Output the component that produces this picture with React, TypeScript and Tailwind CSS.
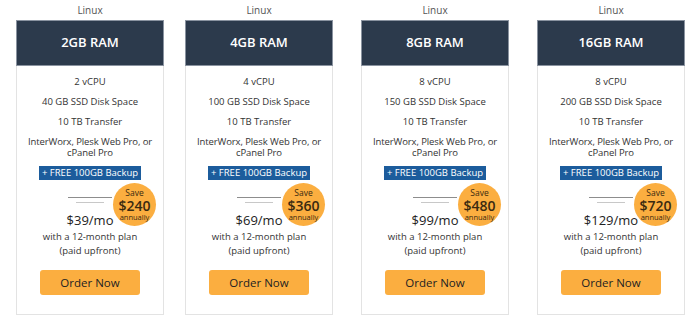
const plans = [
  { ram: "2GB RAM", cpu: "2 vCPU", disk: "40 GB SSD Disk Space", price: "$39/mo", save: "$240", ml: "ml-[16px]" },
  { ram: "4GB RAM", cpu: "4 vCPU", disk: "100 GB SSD Disk Space", price: "$69/mo", save: "$360", ml: "ml-[21px]" },
  { ram: "8GB RAM", cpu: "8 vCPU", disk: "150 GB SSD Disk Space", price: "$99/mo", save: "$480", ml: "ml-[28px]" },
  { ram: "16GB RAM", cpu: "8 vCPU", disk: "200 GB SSD Disk Space", price: "$129/mo", save: "$720", ml: "ml-[28px]" },
];

function PlanCard({ plan }: { plan: (typeof plans)[number] }) {
  return (
    <div className={`flex flex-col items-center w-[148px] ${plan.ml}`}>
      <div className="h-[20px] leading-[20px] text-[10px] text-[#555]">Linux</div>
      <div className="relative w-full h-[295px] border border-[#e3e3e3] flex flex-col items-center">
        <div className="w-[calc(100%+2px)] -mx-px -mt-px h-[46px] bg-[#2c3a4c] border border-[#8a93a0] flex items-center justify-center text-white text-[13px] font-semibold">
          {plan.ram}
        </div>
        <div className="mt-[6px] flex flex-col items-center text-[9.5px] leading-[20px] text-[#333]">
          <div>{plan.cpu}</div>
          <div>{plan.disk}</div>
          <div>10 TB Transfer</div>
        </div>
        <div className="mt-[4px] text-[9.5px] leading-[11px] text-[#333] text-center tracking-[-0.1px]">
          InterWorx, Plesk Web Pro, or
          <br />
          cPanel Pro
        </div>
        <div className="mt-[8px] h-[14px] px-[3px] bg-[#1c5c9c] text-white text-[9.5px] leading-[14px] whitespace-nowrap">
          + FREE 100GB Backup
        </div>
        <div className="mt-[17px] w-[44px] h-px bg-[#8d8d8d]" />
        <div className="mt-[4px] w-[28px] h-px bg-[#c8c8c8]" />
        <div className="mt-[9px] text-[13px] leading-[16px] text-[#222]">{plan.price}</div>
        <div className="mt-[2px] text-[9.5px] leading-[14px] text-[#333] text-center">
          with a 12-month plan
          <br />
          (paid upfront)
        </div>
        <button className="mt-[12px] w-[100px] h-[25px] rounded-[3px] bg-[#fbae40] text-[11.5px] font-medium text-[#222]">
          Order Now
        </button>
        <div className="absolute left-[calc(50%+23px)] top-[162px] w-[43px] h-[43px] rounded-full bg-[#fbae40] flex flex-col items-center justify-center text-[#3a2a10]">
          <div className="text-[8.5px] leading-[10px]">Save</div>
          <div className="text-[14px] leading-[15px] font-semibold">{plan.save}</div>
          <div className="text-[7.5px] leading-[8px]">annually</div>
        </div>
      </div>
    </div>
  );
}

export default function App() {
  return (
    <div className="w-[700px] h-[328px] bg-white flex font-['Open_Sans',sans-serif]">
      {plans.map((p) => (
        <PlanCard key={p.ram} plan={p} />
      ))}
    </div>
  );
}
